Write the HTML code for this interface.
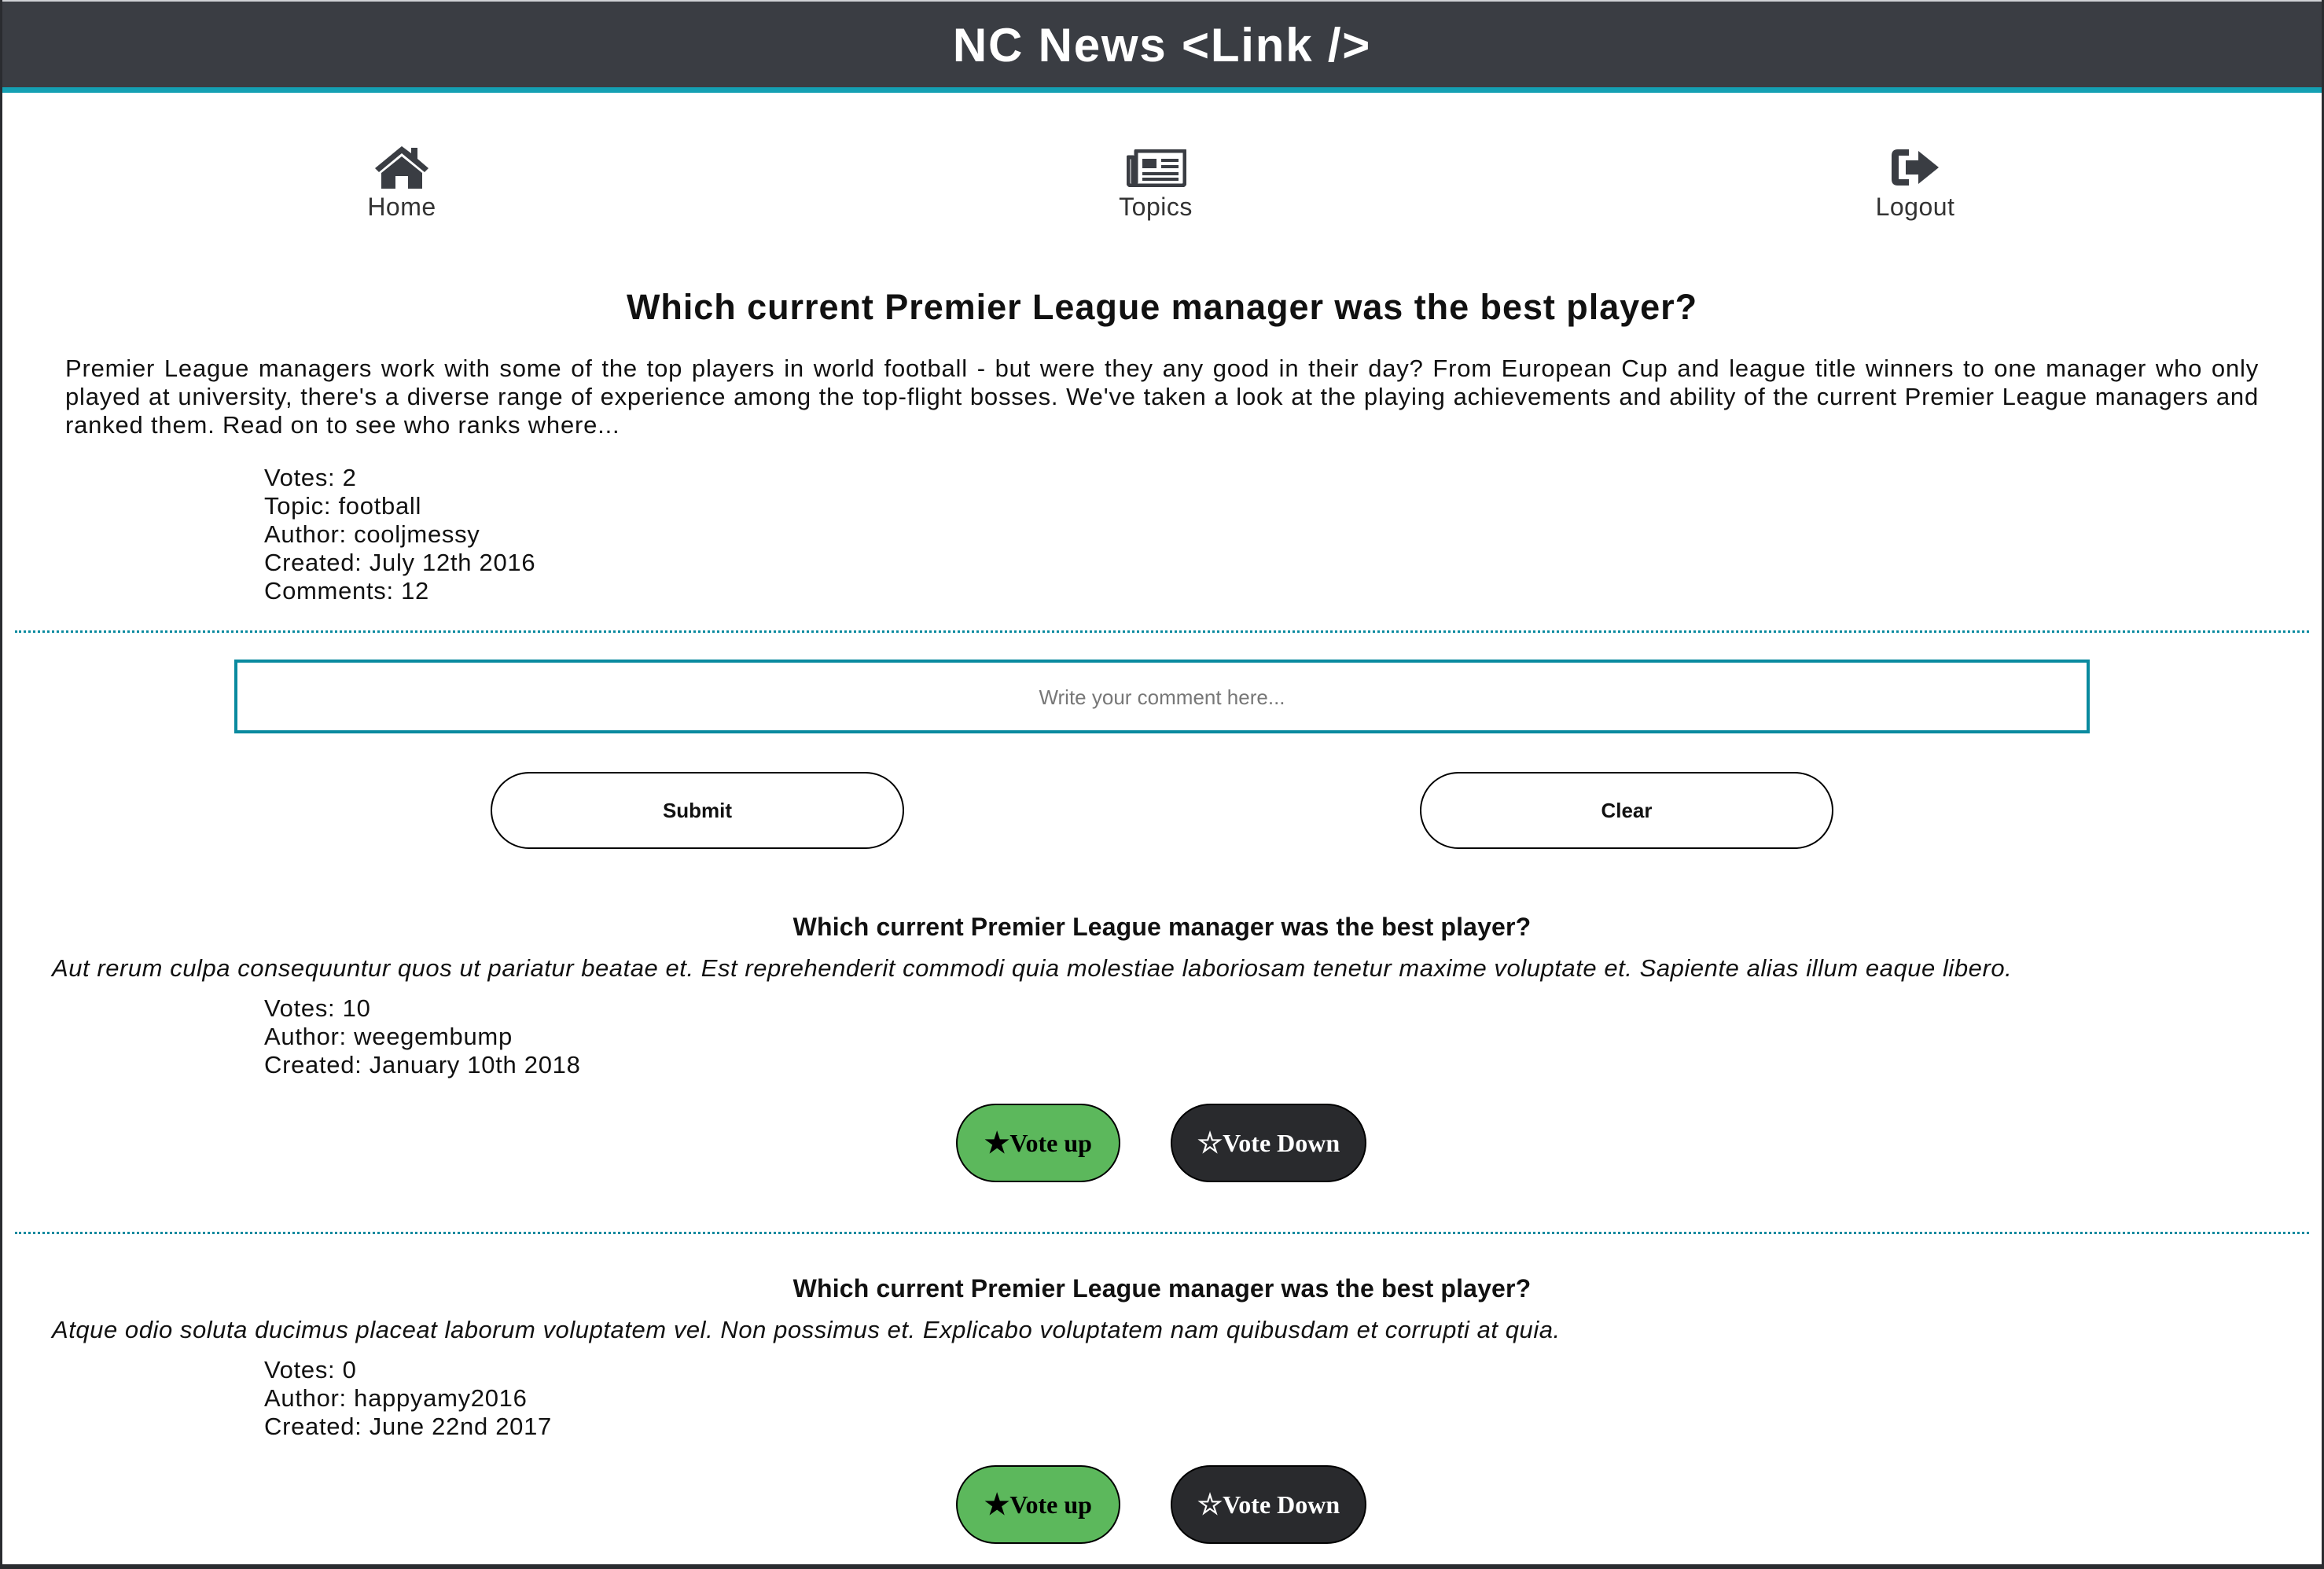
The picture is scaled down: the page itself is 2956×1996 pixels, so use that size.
<!DOCTYPE html>
<html><head><meta charset="utf-8"><style>
*{margin:0;padding:0;box-sizing:border-box}
body{width:2956px;height:1996px;background:#fff;font-family:"Liberation Sans",sans-serif;color:#111;position:relative;overflow:hidden}
.a{position:absolute}
.hdr{left:0;top:0;width:2956px;height:111px;background:#3a3d43;border-top:2px solid #d0d2d6}
.teal{left:0;top:111px;width:2956px;height:7px;background:#14a0b3}
.title{left:0;top:0;width:2956px;height:111px;line-height:116px;text-align:center;color:#fff;font-weight:bold;font-size:60px;letter-spacing:1.8px}
.nav{width:300px;text-align:center;font-size:32px;color:#333;top:245px;letter-spacing:0.5px}
.t{font-size:31px;line-height:36px;white-space:nowrap;letter-spacing:0.7px}
.dot{left:19px;width:2918px;height:0;border-top:3px dotted #0a8a9f}
.btn{border:2px solid #000;border-radius:60px;text-align:center;font-weight:bold;font-size:26px}
.vb{border:2px solid #000;border-radius:60px;font-family:"Liberation Serif",serif;font-weight:bold;font-size:32px;display:flex;align-items:center;justify-content:center}
</style></head><body>
<div class="a hdr"></div>
<div class="a teal"></div>
<div class="a title">NC News &lt;Link /&gt;</div>

<svg class="a" style="left:475px;top:184px" width="72" height="58" viewBox="0 0 72 58"><path d="M36 2 L2 30 L7 35 L36 11 L65 35 L70 30 L56 18 V4 H48 V11 Z" fill="#3a3d43"/><path d="M36 15 L10 36 V56 H28 V40 H44 V56 H62 V36 Z" fill="#3a3d43"/></svg>
<div class="a nav" style="left:361px">Home</div>

<svg class="a" style="left:1433px;top:190px" width="76" height="48" viewBox="0 0 76 48"><path d="M12 2 H74 V42 Q74 46 70 46 H6 Q2 46 2 42 V10 H8 V42 H12 Z" fill="none" stroke="#3a3d43" stroke-width="5" stroke-linejoin="round"/><rect x="20" y="12" width="18" height="12" fill="#3a3d43"/><rect x="44" y="12" width="22" height="4" fill="#3a3d43"/><rect x="44" y="20" width="22" height="4" fill="#3a3d43"/><rect x="20" y="29" width="46" height="4" fill="#3a3d43"/><rect x="20" y="36" width="46" height="4" fill="#3a3d43"/></svg>
<div class="a nav" style="left:1320px">Topics</div>

<svg class="a" style="left:2404px;top:188px" width="64" height="50" viewBox="0 0 64 50"><path d="M24 2 H10 Q2 2 2 10 V40 Q2 48 10 48 H24 V40 H11 V10 H24 Z" fill="#3a3d43"/><path d="M20 16 H36 V4 L62 25 L36 46 V34 H20 Z" fill="#3a3d43"/></svg>
<div class="a nav" style="left:2286px">Logout</div>

<div class="a" style="left:0;top:365px;width:2956px;text-align:center;font-weight:bold;font-size:45px;letter-spacing:0.95px">Which current Premier League manager was the best player?</div>
<div class="a" style="left:83px;top:451px;width:2790px;font-size:31px;line-height:36px;text-align:justify;letter-spacing:0.8px">Premier League managers work with some of the top players in world football - but were they any good in their day? From European Cup and league title winners to one manager who only played at university, there's a diverse range of experience among the top-flight bosses. We've taken a look at the playing achievements and ability of the current Premier League managers and ranked them. Read on to see who ranks where...</div>
<div class="a t" style="left:336px;top:590px">Votes: 2<br>Topic: football<br>Author: cooljmessy<br>Created: July 12th 2016<br>Comments: 12</div>

<div class="a dot" style="top:802px"></div>
<div class="a" style="left:298px;top:839px;width:2360px;height:94px;border:4px solid #0a8a9f;text-align:center;line-height:88px;font-size:26px;color:#777">Write your comment here...</div>
<div class="a btn" style="left:624px;top:982px;width:526px;height:98px;line-height:94px">Submit</div>
<div class="a btn" style="left:1806px;top:982px;width:526px;height:98px;line-height:94px">Clear</div>

<div class="a" style="left:0;top:1161px;width:2956px;text-align:center;font-weight:bold;font-size:32px;letter-spacing:0.15px">Which current Premier League manager was the best player?</div>
<div class="a t" style="left:66px;top:1214px;font-style:italic;letter-spacing:0.55px">Aut rerum culpa consequuntur quos ut pariatur beatae et. Est reprehenderit commodi quia molestiae laboriosam tenetur maxime voluptate et. Sapiente alias illum eaque libero.</div>
<div class="a t" style="left:336px;top:1265px">Votes: 10<br>Author: weegembump<br>Created: January 10th 2018</div>
<div class="a vb" style="left:1216px;top:1404px;width:209px;height:100px;background:#5cb85c;color:#000"><span style="font-size:36px">★</span>Vote up</div>
<div class="a vb" style="left:1489px;top:1404px;width:249px;height:100px;background:#292a2d;color:#fff"><span style="font-size:36px">☆</span>Vote Down</div>

<div class="a dot" style="top:1567px"></div>
<div class="a" style="left:0;top:1621px;width:2956px;text-align:center;font-weight:bold;font-size:32px;letter-spacing:0.15px">Which current Premier League manager was the best player?</div>
<div class="a t" style="left:66px;top:1674px;font-style:italic;letter-spacing:0.55px">Atque odio soluta ducimus placeat laborum voluptatem vel. Non possimus et. Explicabo voluptatem nam quibusdam et corrupti at quia.</div>
<div class="a t" style="left:336px;top:1725px">Votes: 0<br>Author: happyamy2016<br>Created: June 22nd 2017</div>
<div class="a vb" style="left:1216px;top:1864px;width:209px;height:100px;background:#5cb85c;color:#000"><span style="font-size:36px">★</span>Vote up</div>
<div class="a vb" style="left:1489px;top:1864px;width:249px;height:100px;background:#292a2d;color:#fff"><span style="font-size:36px">☆</span>Vote Down</div>

<div class="a" style="left:0;top:0;width:2956px;height:1996px;border-left:3px solid #2a2c30;border-right:3px solid #2a2c30;border-bottom:6px solid #2a2c30;pointer-events:none"></div>
</body></html>
